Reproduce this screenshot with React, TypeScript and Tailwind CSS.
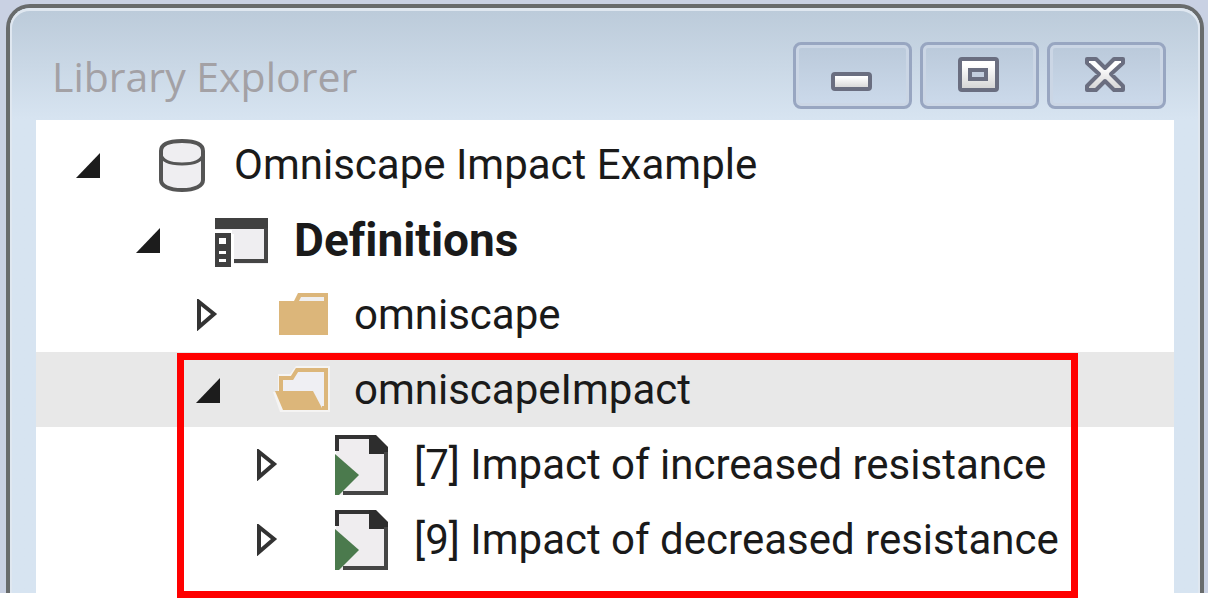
import type { ReactNode } from "react";

function GlyphGradient() {
  return (
    <svg className="absolute size-0" aria-hidden="true">
      <defs>
        <linearGradient id="glyph" x1="0" y1="0" x2="0" y2="1">
          <stop offset="0.2" stopColor="#ffffff" />
          <stop offset="1" stopColor="#d2d2d2" />
        </linearGradient>
        <linearGradient id="cross" gradientUnits="userSpaceOnUse" x1="0" y1="8" x2="0" y2="40">
          <stop offset="0.2" stopColor="#ffffff" />
          <stop offset="1" stopColor="#cfcfcf" />
        </linearGradient>
      </defs>
    </svg>
  );
}

function MinimizeIcon() {
  return (
    <svg className="h-12 w-16" viewBox="0 0 64 48" aria-hidden="true">
      <rect x="12" y="22" width="37" height="15" rx="2" fill="url(#glyph)" stroke="#6a6e80" strokeWidth="4" />
    </svg>
  );
}

function RestoreIcon() {
  return (
    <svg className="h-12 w-16" viewBox="0 0 64 48" aria-hidden="true">
      <rect x="12" y="7" width="37" height="31" rx="2" fill="url(#glyph)" stroke="#6a6e80" strokeWidth="4" />
      <rect x="22" y="18" width="16" height="9" fill="#c3cede" stroke="#6a6e80" strokeWidth="4" />
    </svg>
  );
}

function CloseIcon() {
  return (
    <svg className="h-12 w-16" viewBox="0 0 64 48" fill="none" aria-hidden="true">
      <path
        d="M12 7 H21 L30 16 L39 7 H48 V11 L36 22 L48 34 V38 H39 L30 29 L21 38 H12 V34 L24 22 L12 11 Z"
        fill="url(#cross)"
        stroke="#6a6e80"
        strokeWidth="4"
        strokeLinejoin="round"
      />
    </svg>
  );
}

function DatabaseIcon() {
  return (
    <svg className="size-[60px]" viewBox="0 0 60 60" aria-hidden="true">
      <path
        d="M9 16 C9 9 17 6 30 6 C43 6 51 9 51 16 V45 C51 51 43 55 30 55 C17 55 9 51 9 45 Z"
        fill="#efeef1"
        stroke="#555555"
        strokeWidth="4"
      />
      <path d="M9 19 C10 26 18 29 30 29 C42 29 50 26 51 19" fill="none" stroke="#555555" strokeWidth="3" />
    </svg>
  );
}

function FormIcon() {
  return (
    <svg className="size-[60px]" viewBox="0 0 60 60" aria-hidden="true">
      <path d="M3 9 H56 V54 H22 V24 H3 Z" fill="#efeef1" />
      <path d="M3 8 H56 V19 H3 Z" fill="#404040" />
      <path d="M54 18 V51 H22" fill="none" stroke="#454545" strokeWidth="4" />
      <path d="M3 20 H20 V57 H3 Z" fill="#ffffff" />
      <path d="M3 23 H19 V57 H3 Z" fill="#404040" />
      <path d="M7 28 H14 V34 H7 Z M7 41 H14 V44 H7 Z M7 49 H14 V52 H7 Z" fill="#ffffff" />
    </svg>
  );
}

function FolderIcon() {
  return (
    <svg className="size-[60px]" viewBox="0 0 60 60" aria-hidden="true">
      <path d="M7 16 H22 L26 8 H56 V50 H7 Z" fill="#dcb67a" />
      <path d="M29 12 H52 V16 H27 Z" fill="#f0efef" />
    </svg>
  );
}

function OpenFolderIcon() {
  return (
    <svg className="size-[60px]" viewBox="0 0 60 60" aria-hidden="true">
      <path d="M6 14 H18 L24 6 H58 V52 H8 L1 32 H6 Z" fill="#f5f4f3" />
      <path d="M11 32 V18 H22 L27 10 H52 V48 Z" fill="#efeff3" />
      <path d="M9 32 V18 H20 L25 10 H54 V48 H50" fill="none" stroke="#dcb67a" strokeWidth="4" />
      <path d="M3 31 H41 L51 50 H11 Z" fill="#dcb67a" />
    </svg>
  );
}

function ScenarioIcon() {
  return (
    <svg className="size-[60px]" viewBox="0 0 60 60" aria-hidden="true">
      <path d="M4 0 H44 L56 12 V60 H4 Z" fill="#efedef" />
      <path d="M5 16 V2 H40" fill="none" stroke="#333333" strokeWidth="4" />
      <path d="M37 0 H44 L56 12 V19 H37 Z" fill="#2d2d2d" />
      <path d="M54 17 V58 H11" fill="none" stroke="#454545" strokeWidth="4" />
      <path d="M3 19 L27 40 L7 60 H3 Z" fill="#4b7a4d" />
    </svg>
  );
}

const levels = ["pl-9", "pl-24", "pl-[156px]", "pl-[216px]"];

type RowProps = {
  level: number;
  label: string;
  icon: ReactNode;
  open?: boolean;
  bold?: boolean;
  selected?: boolean;
};

function Row({ level, label, icon, open = false, bold = false, selected = false }: RowProps) {
  return (
    <div
      role="treeitem"
      aria-expanded={open}
      aria-selected={selected}
      className={`flex h-[75px] items-center ${levels[level]} ${selected ? "bg-[#e8e8e8]" : ""}`}
    >
      <button type="button" aria-label={`Toggle ${label}`} className="mr-12 size-8 shrink-0">
        <svg className="size-8" viewBox="0 0 32 32" aria-hidden="true">
          {open ? (
            <path d="M4 29 L28 4 V29 Z" fill="#1c1c1c" />
          ) : (
            <path d="M7 3 V28 L22 15 Z" fill="#ffffff" stroke="#333333" strokeWidth="4" />
          )}
        </svg>
      </button>
      <span className="w-[82px] shrink-0">{icon}</span>
      <span
        className={`leading-[48px] whitespace-nowrap text-[#1a1a1a] ${bold ? "text-[46px] font-bold" : "text-[42px]"}`}
      >
        {label}
      </span>
    </div>
  );
}

function CaptionButton({ label, children }: { label: string; children: ReactNode }) {
  return (
    <button
      type="button"
      aria-label={label}
      className="flex h-[67px] w-[119px] items-center justify-center rounded-lg border-3 border-[#98a6c1] bg-linear-to-b from-[#bac9da] to-[#ccdaeb] shadow-[inset_0_0_0_3px_#cbd6e5]"
    >
      {children}
    </button>
  );
}

export default function App() {
  return (
    <main className="bg-white pb-[5px] font-[Roboto,sans-serif] [font-variant-ligatures:none]">
      <GlyphGradient />
      <div className="bg-[#c9d1e3] pt-1 pr-1 pl-1.5">
        <section className="rounded-t-[24px] border-x-4 border-t-4 border-[#686b6c] bg-[#d7e4f1]">
          <div className="rounded-t-[20px] border-x-2 border-t-3 border-[#dfe7f0] bg-linear-to-b from-[#bccbda] to-[#d7e4f1] to-[108px] px-6">
            <header className="flex h-[109px] items-center justify-between pt-5 pr-2 pl-4">
              <h1 className="font-['Open_Sans',sans-serif] text-[41px] leading-[56px] text-[#a3a1a5]">
                Library Explorer
              </h1>
              <div className="flex gap-2">
                <CaptionButton label="Minimize">
                  <MinimizeIcon />
                </CaptionButton>
                <CaptionButton label="Restore">
                  <RestoreIcon />
                </CaptionButton>
                <CaptionButton label="Close">
                  <CloseIcon />
                </CaptionButton>
              </div>
            </header>
            <div role="tree" aria-label="Library" className="bg-white pt-[7px] pb-4">
              <Row level={0} label="Omniscape Impact Example" icon={<DatabaseIcon />} open />
              <Row level={1} label="Definitions" icon={<FormIcon />} open bold />
              <Row level={2} label="omniscape" icon={<FolderIcon />} />
              <div role="group" className="relative">
                <Row level={2} label="omniscapeImpact" icon={<OpenFolderIcon />} open selected />
                <Row level={3} label="[7] Impact of increased resistance" icon={<ScenarioIcon />} />
                <Row level={3} label="[9] Impact of decreased resistance" icon={<ScenarioIcon />} />
                <div className="pointer-events-none absolute top-px right-24 -bottom-[21px] left-[141px] border-7 border-[#ff0000]" />
              </div>
            </div>
          </div>
        </section>
      </div>
    </main>
  );
}
